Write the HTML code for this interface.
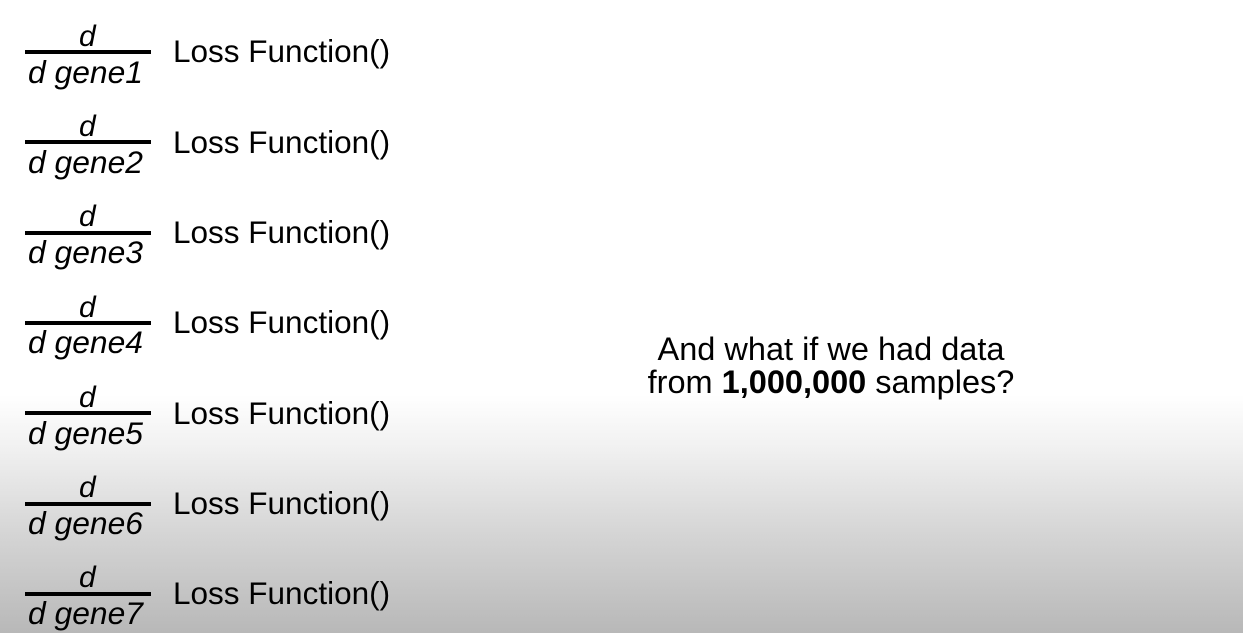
<!DOCTYPE html>
<html><head><meta charset="utf-8"><style>
html,body{margin:0;padding:0}
body{width:1243px;height:633px;position:relative;overflow:hidden;font-family:"Liberation Sans",Arial,sans-serif;color:#000;
background:linear-gradient(to bottom,#fff 0px,#fff 395px,#f0f0f0 450px,#d6d6d6 530px,#b8b8b8 633px);}
.a{position:absolute;white-space:nowrap;line-height:1}
.num{font-style:italic;font-size:30px;left:79px}
.den{font-style:italic;font-size:31.8px;left:28px}
.loss{font-size:31.5px;left:173px}
.bar{position:absolute;left:25px;width:126px;height:4px;background:#000}
.r{position:absolute;left:531px;width:600px;text-align:center;font-size:32.5px;line-height:33px}
</style></head><body>
<div class="a num" style="top:21.6px">d</div><div class="bar" style="top:50px"></div><div class="a den" style="top:56.5px">d gene1</div><div class="a loss" style="top:36.3px">Loss Function()</div>
<div class="a num" style="top:111.9px">d</div><div class="bar" style="top:140.3px"></div><div class="a den" style="top:146.8px">d gene2</div><div class="a loss" style="top:126.6px">Loss Function()</div>
<div class="a num" style="top:202.2px">d</div><div class="bar" style="top:230.6px"></div><div class="a den" style="top:237.1px">d gene3</div><div class="a loss" style="top:216.9px">Loss Function()</div>
<div class="a num" style="top:292.5px">d</div><div class="bar" style="top:320.9px"></div><div class="a den" style="top:327.4px">d gene4</div><div class="a loss" style="top:307.2px">Loss Function()</div>
<div class="a num" style="top:382.8px">d</div><div class="bar" style="top:411.2px"></div><div class="a den" style="top:417.7px">d gene5</div><div class="a loss" style="top:397.5px">Loss Function()</div>
<div class="a num" style="top:473.1px">d</div><div class="bar" style="top:501.5px"></div><div class="a den" style="top:508px">d gene6</div><div class="a loss" style="top:487.8px">Loss Function()</div>
<div class="a num" style="top:563.4px">d</div><div class="bar" style="top:591.8px"></div><div class="a den" style="top:598.3px">d gene7</div><div class="a loss" style="top:578.1px">Loss Function()</div>
<div class="r" style="top:333px">And what if we had data<br>from <b>1,000,000</b> samples?</div>
</body></html>
